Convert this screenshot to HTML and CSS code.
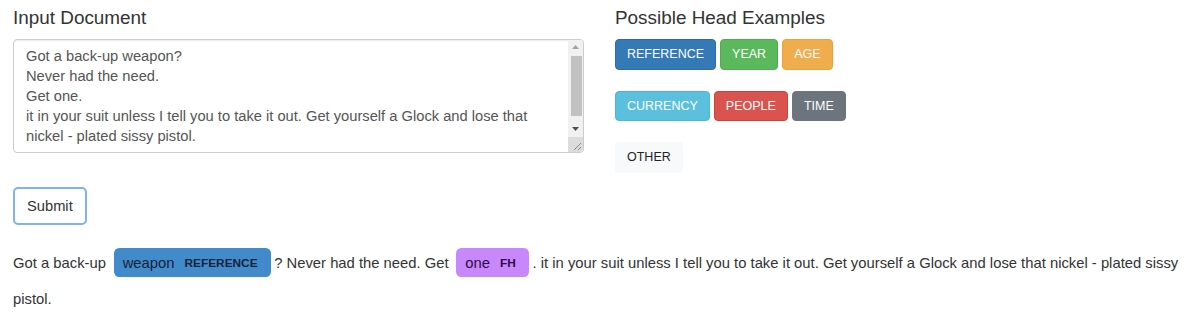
FILE: index.html
```html
<!DOCTYPE html>
<html lang="en">
<head>
<meta charset="utf-8">
<title>Head Examples</title>
<link rel="stylesheet" href="styles.css">
</head>
<body>
<div class="page">
  <div class="cols">
    <div class="col">
      <h4 class="title">Input Document</h4>
      <div class="doc-wrap">
        <textarea class="doc" rows="5" spellcheck="false">Got a back-up weapon?
Never had the need.
Get one.
it in your suit unless I tell you to take it out. Get yourself a Glock and lose that nickel - plated sissy pistol.
</textarea>
        <div class="sbar" aria-hidden="true">
          <div class="sbar-btn">
            <svg width="7" height="4" viewBox="0 0 7 4"><path d="M0 4 L3.5 0 L7 4 Z" fill="#a3a3a3"/></svg>
          </div>
          <div class="sbar-track"><div class="sbar-thumb"></div></div>
          <div class="sbar-btn">
            <svg width="7" height="4" viewBox="0 0 7 4"><path d="M0 0 L7 0 L3.5 4 Z" fill="#505050"/></svg>
          </div>
          <div class="sbar-corner">
            <svg width="15" height="15" viewBox="0 0 15 15"><path d="M13 6 L6 13 M13 10 L10 13" stroke="#8a8a8a" stroke-width="1" fill="none"/></svg>
          </div>
        </div>
      </div>
      <button class="submit" type="button">Submit</button>
    </div>
    <div class="col">
      <h4 class="title">Possible Head Examples</h4>
      <div class="tags">
        <div class="tag-row">
          <span class="tag tag-blue">REFERENCE</span>
          <span class="tag tag-green">YEAR</span>
          <span class="tag tag-orange">AGE</span>
        </div>
        <div class="tag-row">
          <span class="tag tag-cyan">CURRENCY</span>
          <span class="tag tag-red">PEOPLE</span>
          <span class="tag tag-gray">TIME</span>
        </div>
        <div class="tag-row">
          <span class="tag tag-light">OTHER</span>
        </div>
      </div>
    </div>
  </div>
  <div class="result">Got a back-up <mark class="ent ent-ref">weapon <span class="ent-label">REFERENCE</span> </mark> ? Never had the need. Get <mark class="ent ent-fh">one <span class="ent-label">FH</span> </mark> . it in your suit unless I tell you to take it out. Get yourself a Glock and lose that nickel - plated sissy pistol.</div>
</div>
</body>
</html>
```
FILE: styles.css
```css
html, body {
  margin: 0;
  padding: 0;
  background: #fff;
}
body {
  font-family: "Liberation Sans", Arial, sans-serif;
  font-size: 14.7px;
  color: #333;
}
.page {
  padding: 8px 13px 0 13px;
}
.cols {
  display: grid;
  grid-template-columns: 571px 1fr;
  column-gap: 31px;
  align-items: start;
}
.col {
  display: flex;
  flex-direction: column;
  align-items: flex-start;
}
.title {
  margin: 0 0 10px 0;
  font-size: 18.9px;
  font-weight: normal;
  line-height: 1.1;
  color: #333;
}
.doc-wrap {
  position: relative;
  width: 100%;
  height: 114px;
}
.doc {
  display: block;
  box-sizing: border-box;
  width: 100%;
  height: 114px;
  margin: 0;
  padding: 6px 27px 6px 12px;
  border: 1px solid #ccc;
  border-radius: 4px;
  box-shadow: inset 0 1px 1px rgba(0,0,0,.075);
  font-family: "Liberation Sans", Arial, sans-serif;
  font-size: 14.7px;
  line-height: 20px;
  color: #555;
  overflow: hidden;
  resize: none;
}
.sbar {
  position: absolute;
  top: 1px;
  right: 1px;
  bottom: 1px;
  width: 15px;
  display: flex;
  flex-direction: column;
  background: #f1f1f1;
  border-radius: 0 3px 3px 0;
  overflow: hidden;
}
.sbar-btn {
  height: 15px;
  display: flex;
  align-items: center;
  justify-content: center;
}
.sbar-track {
  flex: 1;
  padding: 1px 1px 0 3px;
}
.sbar-thumb {
  height: 60px;
  background: #c1c1c1;
}
.sbar-corner {
  height: 15px;
  background: #dcdcdc;
}
.sbar-corner svg {
  display: block;
}
.submit {
  margin-top: 34px;
  height: 38px;
  padding: 0 12px;
  background: #fff;
  border: 2px solid #80b1f0;
  border-radius: 5px;
  font-family: "Liberation Sans", Arial, sans-serif;
  font-size: 14.7px;
  color: #333;
}
.tags {
  display: flex;
  flex-direction: column;
  gap: 21px;
}
.tag-row {
  display: flex;
  gap: 4px;
}
.tag {
  display: inline-block;
  padding: 5px 11px;
  border: 1px solid transparent;
  border-radius: 4px;
  font-size: 12.5px;
  line-height: 1.5;
  color: #fff;
}
.tag-blue { background: #337ab7; border-color: #2e6da4; }
.tag-green { background: #5cb85c; border-color: #4cae4c; }
.tag-orange { background: #f0ad4e; border-color: #eea236; }
.tag-cyan { background: #5bc0de; border-color: #46b8da; }
.tag-red { background: #d9534f; border-color: #d43f3a; }
.tag-gray { background: #6c757d; border-color: #6c757d; }
.tag-light { background: #f8f9fa; border-color: #f8f9fa; color: #212529; }
.result {
  margin-top: 20px;
  font-size: 14.8px;
  line-height: 36px;
}
.ent {
  padding: 0.45em 0.6em;
  margin: 0 0.25em;
  line-height: 1;
  border-radius: 0.35em;
}
.ent-ref { background: #428bca; color: #17213a; }
.ent-fh { background: #c887fb; color: #2a0c46; }
.ent-label {
  font-size: 0.8em;
  font-weight: bold;
  line-height: 1;
  vertical-align: middle;
  margin-left: 6px;
}
```
